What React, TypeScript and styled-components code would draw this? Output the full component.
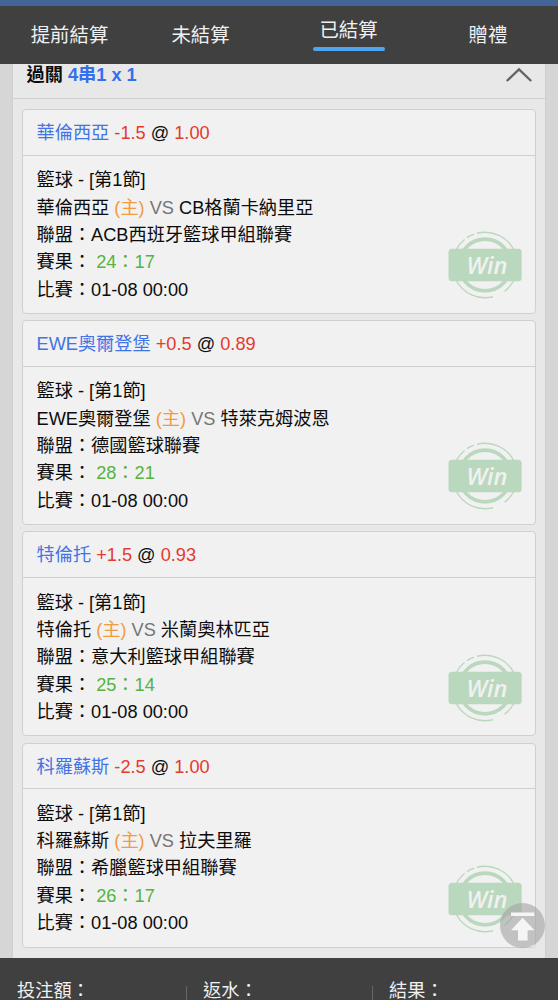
import React from 'react';
import styled, { createGlobalStyle } from 'styled-components';

const GlobalStyle = createGlobalStyle`
  * { box-sizing: border-box; }
  body {
    margin: 0;
    background: #d6d6d6;
    font-family: "Liberation Sans", "Noto Sans CJK TC", sans-serif;
    font-size: 18.2px;
    color: #0c0c0c;
  }
`;

const Screen = styled.div`
  position: relative;
  display: flex;
  flex-direction: column;
  width: 558px;
  height: 1000px;
  overflow: hidden;
`;

const TopStrip = styled.div`
  flex: none;
  height: 5.5px;
  background: #426597;
`;

const TabBar = styled.nav`
  flex: none;
  display: grid;
  grid-template-columns: 139px 123px 173px 106px;
  height: 58.5px;
  background: #404040;
  color: #f0f0f0;
  font-size: 19.4px;
`;

const Tab = styled.div`
  display: flex;
  flex-direction: column;
  align-items: center;
  padding-top: 15.5px;
  line-height: 28px;
  white-space: nowrap;
`;

const ActiveTab = styled(Tab)`
  padding-top: 10.5px;
  &::after {
    content: '';
    width: 72px;
    height: 4.4px;
    margin-top: 2.5px;
    border-radius: 2px;
    background: #4fa5ee;
  }
`;

const Content = styled.main`
  flex: none;
  height: 893.5px;
  overflow: hidden;
  padding: 0 13px 0 12.5px;
`;

const Panel = styled.section`
  height: 100%;
  background: #e8e8e8;
  box-shadow: 0 0 2px #c4c4c4;
`;

const PanelHeader = styled.header`
  display: flex;
  justify-content: space-between;
  align-items: flex-start;
  height: 34.5px;
  padding: 0 13px 0 14px;
  border-bottom: 1.5px solid #d0d0d0;
`;

const PanelTitle = styled.h1`
  margin: 0;
  padding-top: 2px;
  font-size: 18.2px;
  line-height: 19px;
  font-weight: bold;
`;

const Accent = styled.span`
  color: #346fef;
`;

const Chevron = styled.svg`
  margin-top: 2.5px;
  margin-right: -1px;
`;

const CardList = styled.div`
  display: flex;
  flex-direction: column;
  gap: 6.2px;
  padding: 10.5px 9.5px 0 9.5px;
`;

const Card = styled.article`
  height: 205px;
  border: 1.5px solid #d0d0d0;
  border-radius: 4px;
  background: #f1f1f1;
`;

const CardHeader = styled.div`
  height: 45.5px;
  padding: 10px 13.5px 0 13.5px;
  border-bottom: 1px solid #cfcfcf;
  line-height: 27px;
  white-space: nowrap;
`;

const CardBody = styled.div`
  display: flex;
  justify-content: space-between;
  padding: 11.7px 11.5px 0 13.5px;
`;

const Details = styled.div`
  line-height: 27.35px;
  white-space: nowrap;
`;

const Line = styled.div`
  height: 27.35px;
`;

const Tone = styled.span<{ $color: string }>`
  color: ${(p) => p.$color};
`;

const StampArt = styled.svg`
  flex: none;
  margin-top: 63px;
`;

const Footer = styled.footer`
  flex: 1;
  display: grid;
  grid-template-columns: 186px 186px 186px;
  padding-top: 28px;
  background: #404040;
  color: #f0f0f0;
`;

const Total = styled.div`
  padding-left: 17px;
  line-height: 10px;
  white-space: nowrap;
  & + & {
    padding-left: 16px;
    border-left: 1px solid #666;
  }
`;

const TopButton = styled.button`
  position: absolute;
  left: 499.5px;
  top: 903px;
  width: 45px;
  height: 45px;
  padding: 0;
  border: 0;
  border-radius: 50%;
  background: rgba(165, 165, 165, 0.62);
`;

const ButtonArt = styled.svg`
  display: block;
`;

const RED = '#e53a2e';
const BLUE = '#4274e6';

const bets = [
  { home: '華倫西亞', line: '-1.5', odds: '1.00', away: 'CB格蘭卡納里亞', league: 'ACB西班牙籃球甲組聯賽', score: '24：17' },
  { home: 'EWE奧爾登堡', line: '+0.5', odds: '0.89', away: '特萊克姆波恩', league: '德國籃球聯賽', score: '28：21' },
  { home: '特倫托', line: '+1.5', odds: '0.93', away: '米蘭奧林匹亞', league: '意大利籃球甲組聯賽', score: '25：14' },
  { home: '科羅蘇斯', line: '-2.5', odds: '1.00', away: '拉夫里羅', league: '希臘籃球甲組聯賽', score: '26：17' },
];

function WinStamp() {
  return (
    <StampArt width="76" height="70" viewBox="0 0 76 70">
      <g fill="none" stroke="#bad8bd">
        <circle cx="38" cy="35" r="25.8" strokeWidth="3.8" />
        <path strokeWidth="1.4" d="M9 20 A32.7 32.7 0 0 1 17.5 9.5 M20 7.6 A32.7 32.7 0 0 1 27 4.2 M30 3.3 A32.7 32.7 0 0 1 67 20 M67 50 A32.7 32.7 0 0 1 57.5 61.3 M46 66.7 A32.7 32.7 0 0 1 9 50" />
      </g>
      <rect x="1.5" y="18.8" width="73.2" height="32.4" rx="3.5" fill="#bad8bd" />
      <text x="19.5" y="43.8" textLength="41" lengthAdjust="spacingAndGlyphs" fontFamily="Open Sans, Noto Sans, sans-serif" fontSize="23.5" fontStyle="italic" fontWeight="600" fill="#f1f1f1">
        Win
      </text>
    </StampArt>
  );
}

export default function App() {
  return (
    <>
      <GlobalStyle />
      <Screen lang="zh-Hant">
        <TopStrip />
        <TabBar>
          <Tab>提前結算</Tab>
          <Tab>未結算</Tab>
          <ActiveTab>已結算</ActiveTab>
          <Tab>贈禮</Tab>
        </TabBar>
        <Content>
          <Panel>
            <PanelHeader>
              <PanelTitle>
                過關 <Accent>4串1 x 1</Accent>
              </PanelTitle>
              <Chevron width="28" height="16" viewBox="0 0 28 16">
                <path d="M1.8 14 L14 2.4 L26.2 14" fill="none" stroke="#646464" strokeWidth="2.3" />
              </Chevron>
            </PanelHeader>
            <CardList>
              {bets.map((b) => (
                <Card key={b.home}>
                  <CardHeader>
                    <Tone $color={BLUE}>{b.home}</Tone> <Tone $color={RED}>{b.line}</Tone> @ <Tone $color={RED}>{b.odds}</Tone>
                  </CardHeader>
                  <CardBody>
                    <Details>
                      <Line>籃球 - [第1節]</Line>
                      <Line>
                        {b.home} <Tone $color="#f29a3f">(主)</Tone> <Tone $color="#757575">VS</Tone> {b.away}
                      </Line>
                      <Line>聯盟：{b.league}</Line>
                      <Line>
                        賽果： <Tone $color="#55b43c">{b.score}</Tone>
                      </Line>
                      <Line>比賽：01-08 00:00</Line>
                    </Details>
                    <WinStamp />
                  </CardBody>
                </Card>
              ))}
            </CardList>
          </Panel>
        </Content>
        <Footer>
          <Total>投注額：</Total>
          <Total>返水：</Total>
          <Total>結果：</Total>
        </Footer>
        <TopButton aria-label="回到頂部">
          <ButtonArt width="45" height="45" viewBox="0 0 45 45">
            <path d="M11 9.4h23.3v3.6H11z M22.6 14.8 L34.5 27.2 H27.6 V37.6 H18 V27.2 H11 Z" fill="#f5f5f5" />
          </ButtonArt>
        </TopButton>
      </Screen>
    </>
  );
}
